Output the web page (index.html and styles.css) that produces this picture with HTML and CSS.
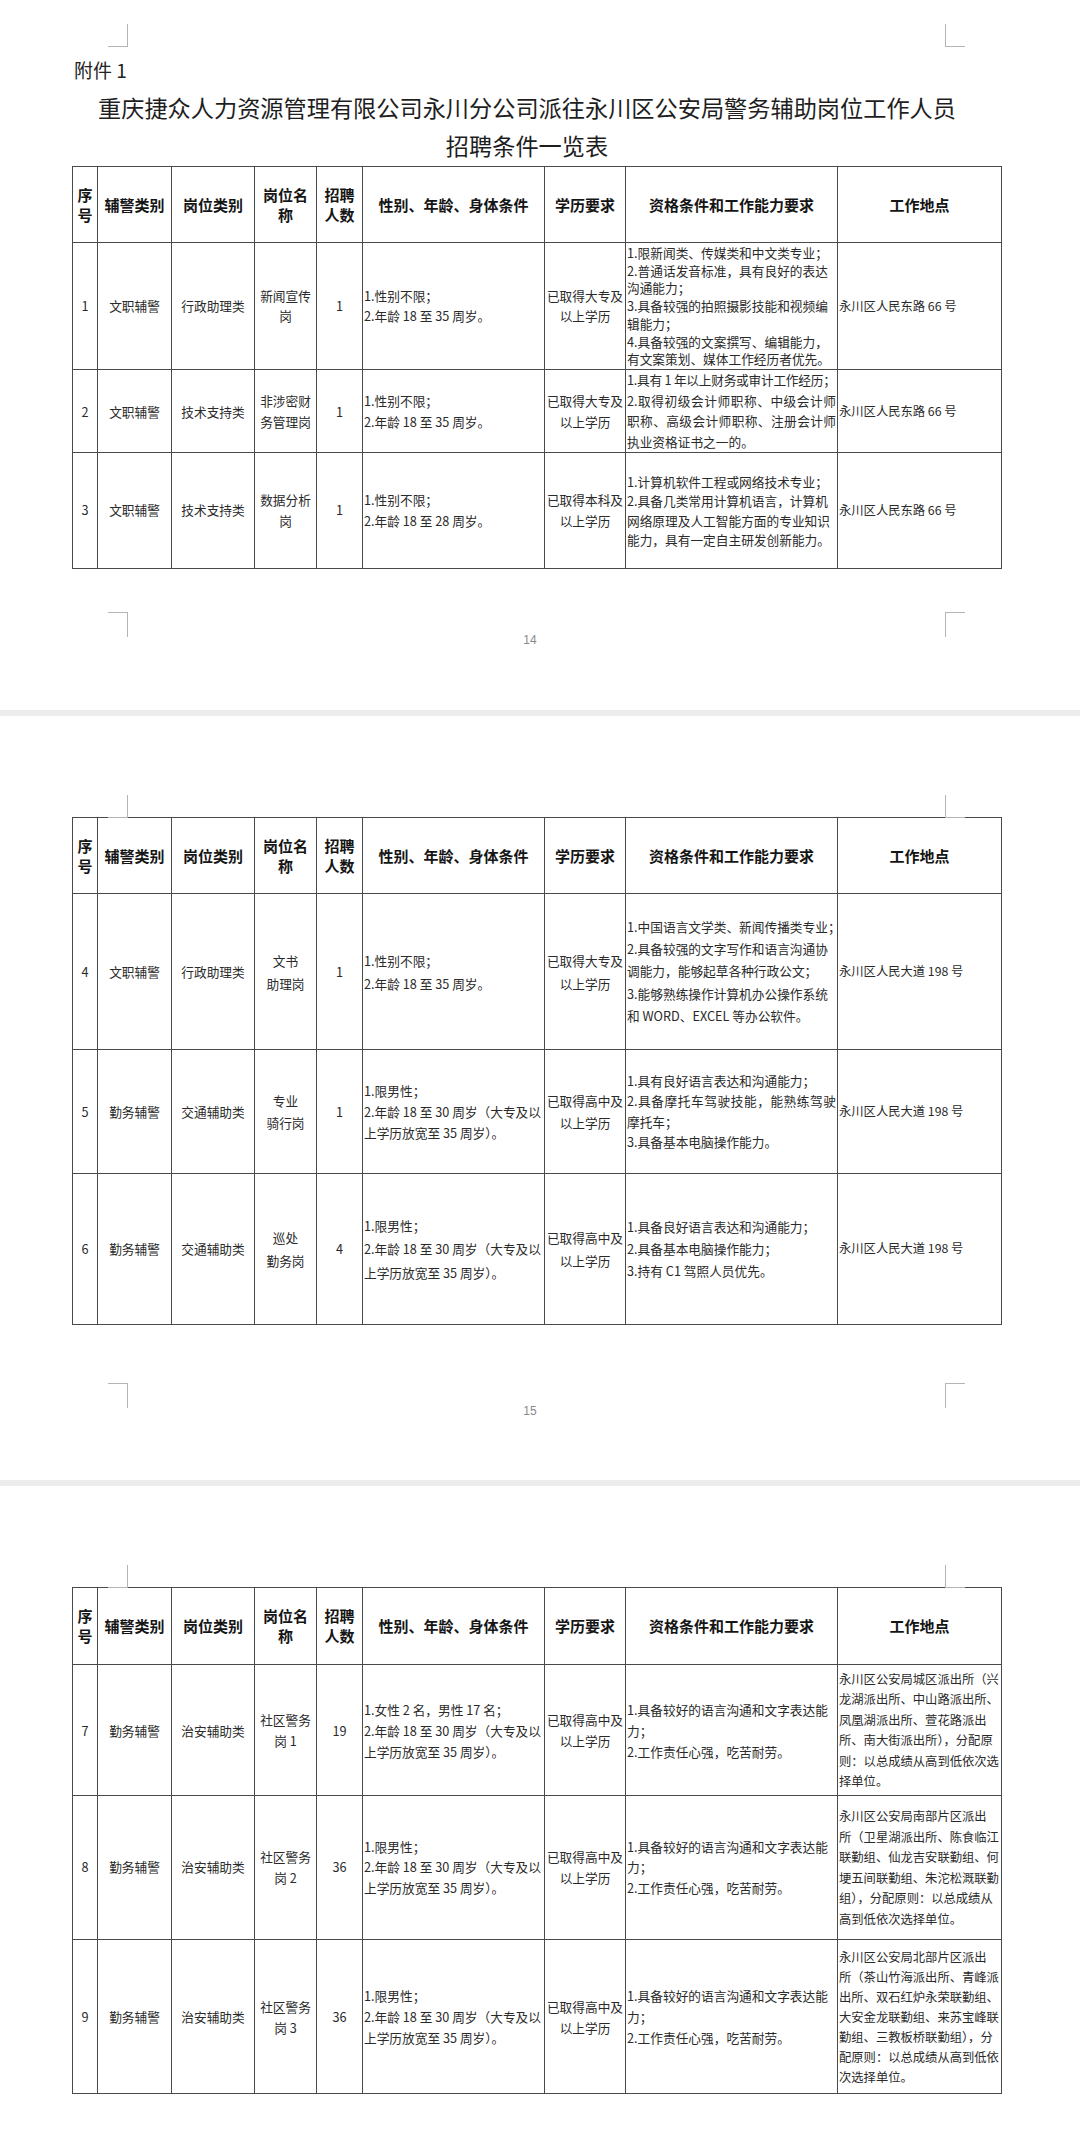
FILE: index.html
```html
<!DOCTYPE html>
<html lang="zh-CN">
<head>
<meta charset="utf-8">
<title>招聘条件一览表</title>
<link rel="stylesheet" href="styles.css">
</head>
<body>
<div class="page p1">
  <div class="sheet">
    <span class="mk tl"></span><span class="mk tr"></span><span class="mk bl"></span><span class="mk br"></span>
    <div class="annex">附件 1</div>
    <h1 class="title">重庆捷众人力资源管理有限公司永川分公司派往永川区公安局警务辅助岗位工作人员<br>招聘条件一览表</h1>
    <table class="grid">
      <colgroup><col class="c1"><col class="c2"><col class="c3"><col class="c4"><col class="c5"><col class="c6"><col class="c7"><col class="c8"><col class="c9"></colgroup>
      <tr class="hd h76"><th>序<br>号</th><th>辅警类别</th><th>岗位类别</th><th>岗位名<br>称</th><th>招聘<br>人数</th><th>性别、年龄、身体条件</th><th>学历要求</th><th>资格条件和工作能力要求</th><th>工作地点</th></tr>
      <tr class="r1"><td>1</td><td>文职辅警</td><td>行政助理类</td><td>新闻宣传<br>岗</td><td>1</td><td class="lt">1.性别不限；<br>2.年龄 18 至 35 周岁。</td><td>已取得大专及<br>以上学历</td><td class="lt q">1.限新闻类、传媒类和中文类专业；<br>2.普通话发音标准，具有良好的表达<br>沟通能力；<br>3.具备较强的拍照摄影技能和视频编<br>辑能力；<br>4.具备较强的文案撰写、编辑能力，<br>有文案策划、媒体工作经历者优先。</td><td class="lt loc">永川区人民东路 66 号</td></tr>
      <tr class="r2"><td>2</td><td>文职辅警</td><td>技术支持类</td><td>非涉密财<br>务管理岗</td><td>1</td><td class="lt">1.性别不限；<br>2.年龄 18 至 35 周岁。</td><td>已取得大专及<br>以上学历</td><td class="lt q"><span class="tight">1.具有 1 年以上财务或审计工作经历；</span><span class="j">2.取得初级会计师职称、中级会计师</span><span class="j">职称、高级会计师职称、注册会计师</span>执业资格证书之一的。</td><td class="lt loc">永川区人民东路 66 号</td></tr>
      <tr class="r3"><td>3</td><td>文职辅警</td><td>技术支持类</td><td>数据分析<br>岗</td><td>1</td><td class="lt">1.性别不限；<br>2.年龄 18 至 28 周岁。</td><td>已取得本科及<br>以上学历</td><td class="lt q">1.计算机软件工程或网络技术专业；<br>2.具备几类常用计算机语言，计算机<br>网络原理及人工智能方面的专业知识<br>能力，具有一定自主研发创新能力。</td><td class="lt loc">永川区人民东路 66 号</td></tr>
    </table>
  </div>
  <div class="folio">14</div>
</div>
<div class="gap"></div>
<div class="page pn">
  <div class="sheet">
    <span class="mk tl"></span><span class="mk tr"></span><span class="mk bl"></span><span class="mk br"></span>
    <table class="grid">
      <colgroup><col class="c1"><col class="c2"><col class="c3"><col class="c4"><col class="c5"><col class="c6"><col class="c7"><col class="c8"><col class="c9"></colgroup>
      <tr class="hd h76"><th>序<br>号</th><th>辅警类别</th><th>岗位类别</th><th>岗位名<br>称</th><th>招聘<br>人数</th><th>性别、年龄、身体条件</th><th>学历要求</th><th>资格条件和工作能力要求</th><th>工作地点</th></tr>
      <tr class="r4"><td>4</td><td>文职辅警</td><td>行政助理类</td><td>文书<br>助理岗</td><td>1</td><td class="lt">1.性别不限；<br>2.年龄 18 至 35 周岁。</td><td>已取得大专及<br>以上学历</td><td class="lt q">1.中国语言文学类、新闻传播类专业；<br>2.具备较强的文字写作和语言沟通协<br>调能力，能够起草各种行政公文；<br>3.能够熟练操作计算机办公操作系统<br>和 WORD、EXCEL 等办公软件。</td><td class="lt loc">永川区人民大道 198 号</td></tr>
      <tr class="r5"><td>5</td><td>勤务辅警</td><td>交通辅助类</td><td>专业<br>骑行岗</td><td>1</td><td class="lt">1.限男性；<br>2.年龄 18 至 30 周岁（大专及以<br>上学历放宽至 35 周岁）。</td><td>已取得高中及<br>以上学历</td><td class="lt q">1.具有良好语言表达和沟通能力；<br><span class="j">2.具备摩托车驾驶技能，能熟练驾驶</span>摩托车；<br>3.具备基本电脑操作能力。</td><td class="lt loc">永川区人民大道 198 号</td></tr>
      <tr class="r6"><td>6</td><td>勤务辅警</td><td>交通辅助类</td><td>巡处<br>勤务岗</td><td>4</td><td class="lt">1.限男性；<br>2.年龄 18 至 30 周岁（大专及以<br>上学历放宽至 35 周岁）。</td><td>已取得高中及<br>以上学历</td><td class="lt q">1.具备良好语言表达和沟通能力；<br>2.具备基本电脑操作能力；<br>3.持有 C1 驾照人员优先。</td><td class="lt loc">永川区人民大道 198 号</td></tr>
    </table>
  </div>
  <div class="folio">15</div>
</div>
<div class="gap"></div>
<div class="page pn p3">
  <div class="sheet">
    <span class="mk tl"></span><span class="mk tr"></span>
    <table class="grid">
      <colgroup><col class="c1"><col class="c2"><col class="c3"><col class="c4"><col class="c5"><col class="c6"><col class="c7"><col class="c8"><col class="c9"></colgroup>
      <tr class="hd h77"><th>序<br>号</th><th>辅警类别</th><th>岗位类别</th><th>岗位名<br>称</th><th>招聘<br>人数</th><th>性别、年龄、身体条件</th><th>学历要求</th><th>资格条件和工作能力要求</th><th>工作地点</th></tr>
      <tr class="r7"><td>7</td><td>勤务辅警</td><td>治安辅助类</td><td>社区警务<br>岗 1</td><td>19</td><td class="lt">1.女性 2 名，男性 17 名；<br>2.年龄 18 至 30 周岁（大专及以<br>上学历放宽至 35 周岁）。</td><td>已取得高中及<br>以上学历</td><td class="lt q">1.具备较好的语言沟通和文字表达能<br>力；<br>2.工作责任心强，吃苦耐劳。</td><td class="lt loc">永川区公安局城区派出所（兴<br>龙湖派出所、中山路派出所、<br>凤凰湖派出所、萱花路派出<br>所、南大街派出所），分配原<br>则：以总成绩从高到低依次选<br>择单位。</td></tr>
      <tr class="r8"><td>8</td><td>勤务辅警</td><td>治安辅助类</td><td>社区警务<br>岗 2</td><td>36</td><td class="lt">1.限男性；<br>2.年龄 18 至 30 周岁（大专及以<br>上学历放宽至 35 周岁）。</td><td>已取得高中及<br>以上学历</td><td class="lt q">1.具备较好的语言沟通和文字表达能<br>力；<br>2.工作责任心强，吃苦耐劳。</td><td class="lt loc">永川区公安局南部片区派出<br>所（卫星湖派出所、陈食临江<br>联勤组、仙龙吉安联勤组、何<br>埂五间联勤组、朱沱松溉联勤<br>组），分配原则：以总成绩从<br>高到低依次选择单位。</td></tr>
      <tr class="r9"><td>9</td><td>勤务辅警</td><td>治安辅助类</td><td>社区警务<br>岗 3</td><td>36</td><td class="lt">1.限男性；<br>2.年龄 18 至 30 周岁（大专及以<br>上学历放宽至 35 周岁）。</td><td>已取得高中及<br>以上学历</td><td class="lt q">1.具备较好的语言沟通和文字表达能<br>力；<br>2.工作责任心强，吃苦耐劳。</td><td class="lt loc">永川区公安局北部片区派出<br>所（茶山竹海派出所、青峰派<br>出所、双石红炉永荣联勤组、<br>大安金龙联勤组、来苏宝峰联<br>勤组、三教板桥联勤组），分<br>配原则：以总成绩从高到低依<br>次选择单位。</td></tr>
    </table>
  </div>
</div>
</body>
</html>
```

FILE: styles.css
```css
html, body {
  margin: 0;
  padding: 0;
  background: #ffffff;
}
body {
  font-family: "Noto Sans CJK SC", "Noto Sans", sans-serif;
  color: #2a2a2a;
}
.page {
  box-sizing: border-box;
  background: #ffffff;
}
.p1 {
  height: 710px;
  padding-top: 46px;
}
.pn {
  height: 764px;
  padding-top: 101px;
}
.p3 {
  height: 643px;
  overflow: hidden;
}
.gap {
  height: 6px;
  background: #ececec;
}
.sheet {
  display: flow-root;
  position: relative;
  width: 818px;
  height: 566px;
  margin-left: 127px;
}
.mk {
  position: absolute;
  width: 19px;
  border: 0 solid #b4b4b4;
}
.tl {
  left: -19px;
  top: -22px;
  height: 22px;
  border-right-width: 1px;
  border-bottom-width: 1px;
}
.tr {
  left: 818px;
  top: -22px;
  height: 22px;
  border-left-width: 1px;
  border-bottom-width: 1px;
}
.bl {
  left: -19px;
  top: 566px;
  height: 24px;
  border-right-width: 1px;
  border-top-width: 1px;
}
.br {
  left: 818px;
  top: 566px;
  height: 24px;
  border-left-width: 1px;
  border-top-width: 1px;
}
.annex {
  margin: 12px 0 0 -53px;
  font-size: 19px;
  line-height: 24px;
  color: #222;
}
.title {
  margin: 6px -60px 2px -60px;
  padding-right: 18px;
  font-size: 23.2px;
  line-height: 38px;
  font-weight: 400;
  text-align: center;
  white-space: nowrap;
  color: #1e1e1e;
}
.folio {
  margin-top: 20px;
  width: 818px;
  margin-left: 127px;
  padding-right: 12px;
  box-sizing: border-box;
  text-align: center;
  font-family: "Liberation Sans Narrow", "Liberation Sans", sans-serif;
  font-size: 12px;
  line-height: 16px;
  color: #8a8a8a;
}
.grid {
  width: 929px;
  margin-left: -55px;
  border-collapse: collapse;
  table-layout: fixed;
}
.c1 { width: 25px; }
.c2 { width: 74px; }
.c3 { width: 83px; }
.c4 { width: 62px; }
.c5 { width: 46px; }
.c6 { width: 182px; }
.c7 { width: 81px; }
.c8 { width: 212px; }
.c9 { width: 164px; }
.grid th, .grid td {
  border: 1px solid #4a4a4a;
  padding: 0 1px;
  vertical-align: middle;
  text-align: center;
  white-space: nowrap;
  overflow: visible;
}
.grid th {
  font-size: 15px;
  line-height: 20px;
  font-weight: 700;
  color: #151515;
}
.grid td {
  font-size: 12.7px;
  line-height: 20px;
  font-weight: 400;
}
.grid td.lt {
  text-align: left;
}
.grid td.loc {
  font-size: 12.3px;
  padding: 0 0 0 1px;
}
.j {
  display: block;
  white-space: normal;
  text-align: justify;
  text-align-last: justify;
}
.tight {
  display: block;
  letter-spacing: -0.25px;
}
.h76 { height: 76px; }
.h77 { height: 77px; }
.r1 { height: 127px; }
.r2 { height: 83px; }
.r3 { height: 116px; }
.r4 { height: 156px; }
.r5 { height: 124px; }
.r6 { height: 151px; }
.r7 { height: 131px; }
.r8 { height: 144px; }
.r9 { height: 154px; }
.r1 td { line-height: 20px; }
.r1 td.q { line-height: 17.8px; }
.r2 td { line-height: 21px; }
.r2 td.q { line-height: 20.5px; }
.r3 td { line-height: 20.7px; }
.r3 td.q { line-height: 19.5px; }
.r4 td { line-height: 23px; }
.r4 td.q { line-height: 22.3px; }
.r5 td { line-height: 21.3px; }
.r5 td.q { line-height: 20.5px; }
.r6 td { line-height: 23.3px; }
.r6 td.q { line-height: 21.7px; }
.r7 td { line-height: 21px; }
.r7 td.loc { line-height: 20.5px; }
.r8 td { line-height: 20.5px; }
.r8 td.loc { line-height: 20.5px; }
.r9 td { line-height: 21px; }
.r9 td.loc { line-height: 20px; }
```
